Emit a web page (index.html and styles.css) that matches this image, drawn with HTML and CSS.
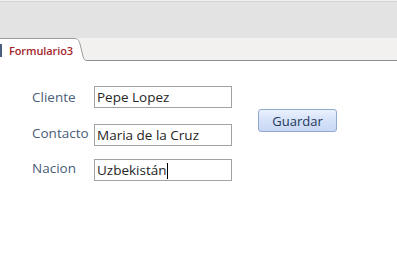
FILE: index.html
```html
<!DOCTYPE html>
<html lang="es">
<head>
<meta charset="utf-8">
<title>Formulario3</title>
<link rel="stylesheet" href="styles.css">
</head>
<body>
<div class="window">
  <div class="topbar"></div>
  <div class="tabstrip">
    <div class="tab">
      <span class="tab-mark"></span>
      <span class="tab-label">Formulario3</span>
    </div>
    <svg class="tab-curve" width="14" height="23" viewBox="0 0 14 23">
      <path d="M0 0.5 H1 C5 0.5 5.5 2 7 6 L10 18.5 C11 21.5 12 22.5 14 22.5 V23 H0 Z" fill="#ffffff"/>
      <path d="M0 0.5 H1 C5 0.5 5.5 2 7 6 L10 18.5 C11 21.5 12 22.5 14 22.5" fill="none" stroke="#9b9b9b" stroke-width="1"/>
    </svg>
    <div class="tab-rest"></div>
  </div>
  <div class="form">
    <div class="fields">
      <div class="row row-1">
        <span class="label">Cliente</span>
        <div class="box">Pepe Lopez</div>
      </div>
      <div class="row row-2">
        <span class="label">Contacto</span>
        <div class="box">Maria de la Cruz</div>
      </div>
      <div class="row row-3">
        <span class="label">Nacion</span>
        <div class="box">Uzbekistán<span class="caret"></span></div>
      </div>
    </div>
    <div class="actions">
      <button class="btn" type="button">Guardar</button>
    </div>
  </div>
</div>
</body>
</html>
```
FILE: styles.css
```css
html, body {
  margin: 0;
  padding: 0;
  background: #ffffff;
}
body {
  width: 397px;
  height: 255px;
  overflow: hidden;
  font-family: "Open Sans", "Noto Sans", sans-serif;
}
.window {
  display: flex;
  flex-direction: column;
  height: 255px;
}
.topbar {
  height: 37px;
  background: #e3e3e3;
  border-top: 1px solid #f0f0f0;
  box-shadow: inset 0 1px 0 #d2d2d2;
}
.tabstrip {
  display: flex;
  align-items: stretch;
  height: 23px;
  background: #f2f1f0;
}
.tab {
  display: flex;
  align-items: center;
  width: 73px;
  flex: none;
  background: #ffffff;
  border-top: 1px solid #9b9b9b;
  box-sizing: border-box;
}
.tab-mark {
  width: 2px;
  height: 13px;
  margin-top: 1px;
  background: #4a5f80;
}
.tab-label {
  margin-left: 7px;
  font-size: 11px;
  font-weight: 600;
  color: #a3252b;
  letter-spacing: -0.1px;
  line-height: 1;
  margin-top: 1px;
  white-space: nowrap;
}
.tab-curve {
  display: block;
  flex: none;
}
.tab-rest {
  flex: 1;
  border-bottom: 1px solid #8e8e8e;
}
.form {
  display: flex;
  align-items: flex-start;
  padding-left: 32px;
}
.fields {
  display: flex;
  flex-direction: column;
}
.row {
  display: flex;
  align-items: flex-start;
}
.row-1 { margin-top: 25px; }
.row-2 { margin-top: 16px; }
.row-3 { margin-top: 13px; }
.label {
  width: 62px;
  font-size: 13.5px;
  line-height: 18px;
  color: #4a5d78;
  padding-top: 2px;
}
.row-2 .label { padding-top: 0; }
.row-3 .label { padding-top: 0; }
.box {
  width: 138px;
  height: 22px;
  box-sizing: border-box;
  border: 1px solid #a2a2a2;
  padding-left: 2px;
  font-size: 13.5px;
  line-height: 20px;
  color: #262626;
  white-space: nowrap;
}
.caret {
  display: inline-block;
  width: 1px;
  height: 16px;
  background: #000000;
  vertical-align: -4px;
}
.actions {
  margin-left: 26px;
  margin-top: 48px;
}
.btn {
  display: block;
  width: 79px;
  height: 23px;
  box-sizing: border-box;
  border: 1px solid #93a8cf;
  border-radius: 3px;
  background: linear-gradient(#eaf1fd, #d3e0f8 55%, #c9d8f5);
  font-family: "Open Sans", "Noto Sans", sans-serif;
  font-size: 13px;
  color: #24385a;
  padding: 0;
  line-height: 20px;
}
```
